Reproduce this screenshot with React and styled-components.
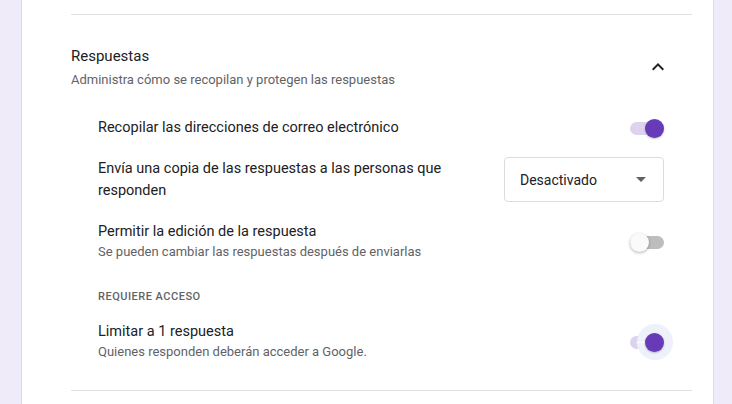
import React from 'react'
import styled, { createGlobalStyle, css } from 'styled-components'

const GlobalStyle = createGlobalStyle`
    html, body {
        margin: 0;
        padding: 0;
        background: #f0ebf8;
        font-family: Roboto, "Noto Sans", Arial, sans-serif;
        -webkit-font-smoothing: antialiased;
    }
`

const Page = styled.div`
    height: 404px;
    overflow: hidden;
    padding-left: 21px;
`

const Card = styled.div`
    width: 693px;
    height: 404px;
    background: #fff;
    border-left: 1px solid #dadce0;
    border-right: 1px solid #dadce0;
    padding: 14px 21px 0 49px;
    box-sizing: border-box;
`

const Divider = styled.div`
    height: 1px;
    background: #e0e0e0;
    margin-top: ${props => props.top || 0}px;
`

const Header = styled.div`
    display: flex;
    align-items: center;
    justify-content: space-between;
    padding: 29px 22px 0 0;
`

const Title = styled.div`
    font-size: 15px;
    line-height: 24px;
    color: #202124;
`

const Subtitle = styled.div`
    font-size: 13px;
    line-height: 18px;
    color: #5f6368;
    margin-top: 3px;
`

const IconButton = styled.button`
    width: 24px;
    height: 24px;
    padding: 0;
    border: 0;
    background: none;
    display: flex;
    align-items: center;
    justify-content: center;
    cursor: pointer;
`

const Rows = styled.div`
    display: flex;
    flex-direction: column;
    padding: 0 28px 0 27px;
`

const Row = styled.div`
    display: flex;
    align-items: center;
    justify-content: space-between;
    margin-top: ${props => props.top}px;
`

const Label = styled.div`
    font-size: 14.5px;
    line-height: ${props => props.lh || 20}px;
    color: #202124;
    max-width: ${props => props.max || 500}px;
`

const Hint = styled.div`
    font-size: 13px;
    line-height: 20px;
    color: #5f6368;
`

const Group = styled.div`
    font-size: 11px;
    font-weight: 500;
    letter-spacing: 0.5px;
    text-transform: uppercase;
    color: #5f6368;
    line-height: 16px;
    margin-top: 27px;
`

const Track = styled.div`
    position: relative;
    width: 34px;
    height: 13px;
    border-radius: 7px;
    flex-shrink: 0;
    background: ${props => (props.on ? '#ddd3ef' : '#bdbdbd')};
`

const Thumb = styled.div`
    position: absolute;
    top: 50%;
    width: 19px;
    height: 19px;
    margin-top: -9.5px;
    border-radius: 50%;
    ${props => props.on
        ? css`
            right: 0;
            background: #673ab7;
            box-shadow: 0 1px 2px rgba(0,0,0,0.25);
        `
        : css`
            left: 0;
            background: #fafafa;
            box-shadow: 0 1px 3px rgba(0,0,0,0.3);
        `}
`

const Halo = styled.div`
    position: absolute;
    top: 50%;
    right: -8.5px;
    width: 36px;
    height: 36px;
    margin-top: -18px;
    border-radius: 50%;
    background: #eef0fb;
`

const TrackLine = styled.div`
    position: absolute;
    left: 6px;
    top: 6px;
    width: 12px;
    height: 1px;
    background: rgba(255,255,255,0.8);
`

const Select = styled.div`
    width: 160px;
    height: 45px;
    border: 1px solid #dadce0;
    border-radius: 4px;
    display: flex;
    align-items: center;
    justify-content: space-between;
    padding: 0 17px 0 15px;
    box-sizing: border-box;
    font-size: 14px;
    color: #202124;
    flex-shrink: 0;
`

const Arrow = styled.span`
    width: 0;
    height: 0;
    border-left: 5px solid transparent;
    border-right: 5px solid transparent;
    border-top: 5px solid #5f6368;
`

function Switch({ on, focused }) {
    return (
        <Track on={on}>
            {focused && <Halo />}
            {focused && <TrackLine />}
            <Thumb on={on} />
        </Track>
    )
}

function ExpandLess() {
    return (
        <svg width="24" height="24" viewBox="0 0 24 24">
            <path d="M12 8l-6 6 1.41 1.41L12 10.83l4.59 4.58L18 14z" fill="#202124" />
        </svg>
    )
}

export default function App() {
    return (
        <Page>
            <GlobalStyle />
            <Card>
                <Divider />
                <Header>
                    <div>
                        <Title>Respuestas</Title>
                        <Subtitle>Administra cómo se recopilan y protegen las respuestas</Subtitle>
                    </div>
                    <IconButton aria-label="Contraer">
                        <ExpandLess />
                    </IconButton>
                </Header>
                <Rows>
                    <Row top={29}>
                        <Label>Recopilar las direcciones de correo electrónico</Label>
                        <Switch on />
                    </Row>
                    <Row top={19}>
                        <Label lh={22} max={380}>Envía una copia de las respuestas a las personas que responden</Label>
                        <Select>
                            Desactivado
                            <Arrow />
                        </Select>
                    </Row>
                    <Row top={20}>
                        <div>
                            <Label>Permitir la edición de la respuesta</Label>
                            <Hint>Se pueden cambiar las respuestas después de enviarlas</Hint>
                        </div>
                        <Switch />
                    </Row>
                    <Group>Requiere acceso</Group>
                    <Row top={17}>
                        <div>
                            <Label>Limitar a 1 respuesta</Label>
                            <Hint>Quienes responden deberán acceder a Google.</Hint>
                        </div>
                        <Switch on focused />
                    </Row>
                </Rows>
                <Divider top={28} />
            </Card>
        </Page>
    )
}
